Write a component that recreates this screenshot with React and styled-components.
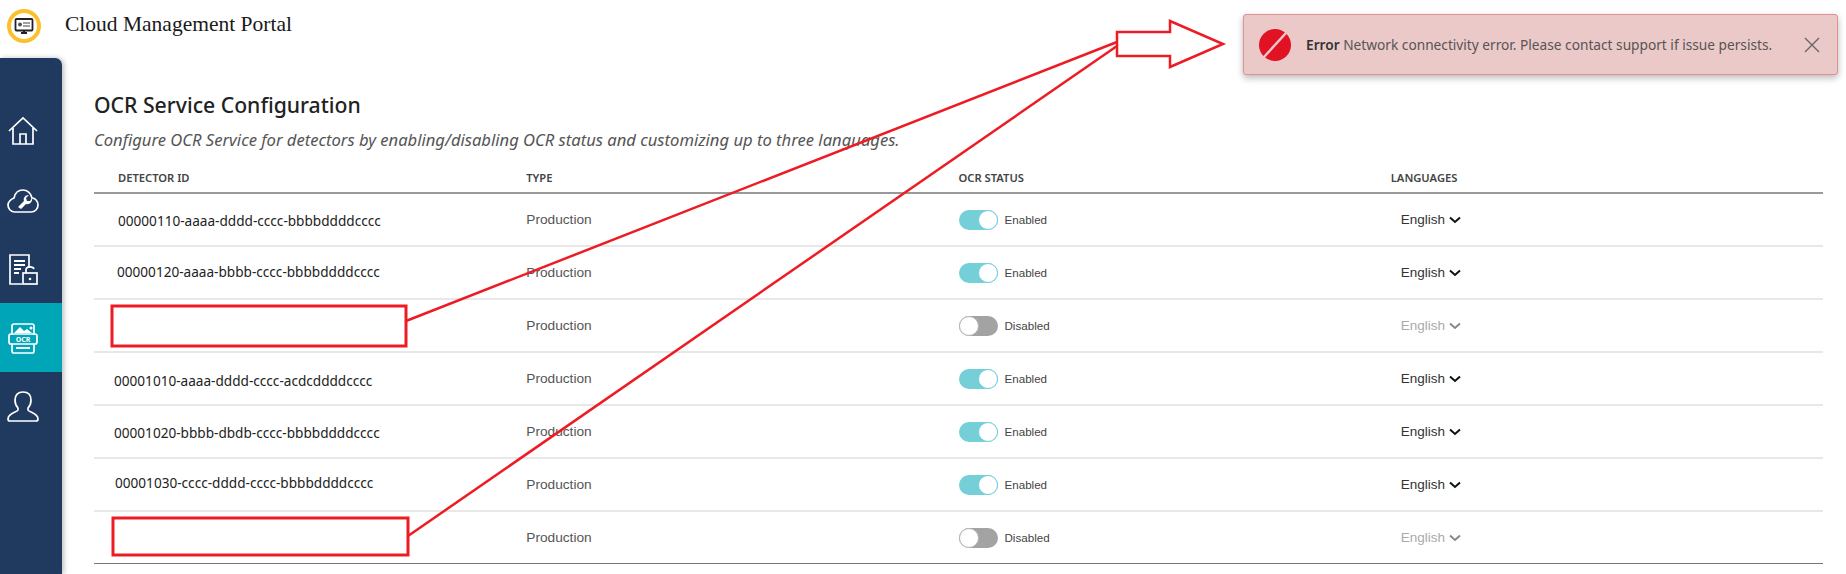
import React from 'react'
import styled, { createGlobalStyle } from 'styled-components'

const GlobalStyle = createGlobalStyle`
  html, body {
    margin: 0;
    padding: 0;
    background: #fff;
    overflow: hidden;
  }
`

const Page = styled.div`
  position: relative;
  width: 1846px;
  height: 574px;
  overflow: hidden;
  display: flex;
  flex-direction: column;
  font-family: 'Noto Sans', sans-serif;
`

const TopBar = styled.header`
  height: 58px;
  flex: none;
  display: flex;
  align-items: flex-start;
  padding: 9px 0 0 7px;
  box-sizing: border-box;
  gap: 24px;
`

const PortalName = styled.div`
  font-family: 'Liberation Serif', serif;
  font-size: 21.5px;
  line-height: 24px;
  color: #1a1a1a;
  margin-top: 3px;
`

const Body = styled.div`
  flex: 1;
  display: flex;
  min-height: 0;
`

const Sidebar = styled.nav`
  width: 62px;
  flex: none;
  background: #203a5f;
  border-top-right-radius: 7px;
  box-shadow: 2px 0 5px rgba(0, 0, 0, 0.25);
  padding-top: 38px;
  box-sizing: border-box;
`

const NavItem = styled.div`
  height: 69px;
  padding-left: 7px;
  display: flex;
  align-items: center;
  background: ${(p) => (p.$active ? '#00a6b8' : 'transparent')};
`

const Main = styled.main`
  flex: 1;
  padding: 32px 23px 0 32px;
  min-width: 0;
`

const Title = styled.h1`
  margin: 0;
  font-size: 21.2px;
  line-height: 29px;
  font-weight: 500;
  color: #222;
`

const Subtitle = styled.p`
  margin: 11px 0 0;
  font-size: 16.6px;
  line-height: 20px;
  font-style: italic;
  color: #555;
`

const Table = styled.div`
  margin-top: 18px;
  border-bottom: 1px solid #777;
`

const Row = styled.div`
  display: grid;
  grid-template-columns: repeat(4, 1fr);
  align-items: center;
  height: 53px;
  box-sizing: border-box;
  border-bottom: 2px solid #e8e8e8;

  &:last-child {
    border-bottom: none;
    height: 51px;
  }
`

const HeadRow = styled.div`
  display: grid;
  grid-template-columns: repeat(4, 1fr);
  align-items: center;
  height: 26px;
  box-sizing: border-box;
  border-bottom: 2px solid #999;
  padding-bottom: 6px;
`

const HeadCell = styled.div`
  font-size: 11.2px;
  font-weight: 600;
  color: #444;
  padding-left: ${(p) => p.$indent || 0}px;
`

// the ids sit slightly off the row centre in the reference
const DetectorId = styled.div`
  font-size: 13.6px;
  color: #222;
  min-height: 18px;
  line-height: 18px;
  padding-left: ${(p) => p.$indent}px;
  padding-top: ${(p) => p.$drop || 0}px;
  padding-bottom: ${(p) => p.$rise || 0}px;
`

const TypeCell = styled.div`
  font-family: 'Liberation Sans', sans-serif;
  font-size: 13.7px;
  color: #555;
`

const StatusCell = styled.div`
  display: flex;
  align-items: center;
  gap: 7px;
  font-family: 'Liberation Sans', sans-serif;
  font-size: 11.6px;
  color: #444;
`

const Toggle = styled.span`
  position: relative;
  width: 39px;
  height: 20px;
  border-radius: 10px;
  background: ${(p) => (p.$on ? '#74cfd9' : '#a3a3a3')};

  &::after {
    content: '';
    position: absolute;
    top: 0;
    left: ${(p) => (p.$on ? '19px' : '0')};
    width: 18px;
    height: 18px;
    border-radius: 50%;
    background: #fff;
    border: 1px solid ${(p) => (p.$on ? '#74cfd9' : '#b5b5b5')};
  }
`

const LanguageCell = styled.div`
  display: flex;
  align-items: center;
  gap: 4px;
  padding-left: 10px;
  font-family: 'Liberation Sans', sans-serif;
  font-size: 13.5px;
  color: ${(p) => (p.$off ? '#aaa' : '#333')};
`

const Chevron = styled.svg`
  width: 12px;
  height: 8px;
  fill: none;
  stroke: ${(p) => (p.$off ? '#888' : '#111')};
  stroke-width: 2;
`

const Toast = styled.div`
  position: absolute;
  left: 1243px;
  top: 14px;
  width: 595px;
  height: 61px;
  box-sizing: border-box;
  display: flex;
  align-items: center;
  padding: 0 17px 0 15px;
  background: #ecc9c9;
  border: 1px solid #df9090;
  border-radius: 3px;
  box-shadow: 0 3px 7px rgba(0, 0, 0, 0.28);
  font-size: 13.7px;
  color: #555;
`

const ToastText = styled.div`
  flex: 1;
  margin-left: 15px;

  strong {
    color: #333;
    font-weight: 600;
  }
`

const Annotations = styled.svg`
  position: absolute;
  left: 0;
  top: 0;
  width: 1846px;
  height: 574px;
  pointer-events: none;
  fill: none;
  stroke: #ed1c24;
`

const NavIcon = styled.svg`
  width: 32px;
  height: 32px;
  fill: none;
  stroke: #fff;
  stroke-width: 1.7;
`

const HomeIcon = () => (
  <NavIcon viewBox="0 0 32 32">
    <path d="M2 16 16 3l14 13" />
    <path d="M6 13v16h20V13" />
    <path d="M13 29V19h6v10" />
  </NavIcon>
)

const CloudIcon = () => (
  <NavIcon viewBox="0 0 32 32">
    <path d="M8 28h16c4 0 7-3 7-7s-3-7-6-7c-1-5-5-8-9-8-5 0-8 3-9 8-3 1-6 4-6 7 0 4 3 7 7 7z" />
    <path d="M11 23l6-6c-1-3 1-6 5-6l-3 3 1 3 3 0 2-3c1 4-3 7-6 6l-5 5z" fill="#fff" stroke="none" />
  </NavIcon>
)

const PolicyIcon = () => (
  <NavIcon viewBox="0 0 32 32">
    <path d="M22 15V2H3v29h12" />
    <path d="M7 8h11M7 12h11M7 16h7M7 20h5" strokeWidth="2" />
    <rect x="16" y="20" width="14" height="11" />
    <path d="M19 20v-3c0-4 7-4 8-1" />
    <circle cx="23" cy="26" r="1.3" fill="#fff" stroke="none" />
  </NavIcon>
)

const OcrIcon = () => (
  <NavIcon viewBox="0 0 32 32">
    <path d="M5 13V4a2 2 0 0 1 2-2h18a2 2 0 0 1 2 2v9" />
    <path d="M7 11l6-6 4 4 3-2 5 4z" fill="#fff" stroke="none" />
    <circle cx="24" cy="6" r="1.5" fill="#fff" stroke="none" />
    <rect x="2" y="12" width="28" height="10" rx="2" />
    <text x="16" y="20" textAnchor="middle" fontSize="7" fontWeight="700" fill="#fff" stroke="none" fontFamily="Noto Sans, sans-serif">OCR</text>
    <path d="M5 22v7a2 2 0 0 0 2 2h18a2 2 0 0 0 2-2v-7" />
    <path d="M9 26h14" strokeWidth="2" />
  </NavIcon>
)

const PersonIcon = () => (
  <NavIcon viewBox="0 0 32 32">
    <path d="M11 17c-2-2-3-5-3-8 0-5 3-8 8-8s8 3 8 8c0 3-1 6-3 8v2c0 2 10 3 10 9 0 2-1 2-2 2H3c-1 0-2 0-2-2 0-6 10-7 10-9z" />
  </NavIcon>
)

const LogoIcon = () => (
  <svg width="34" height="34" viewBox="0 0 34 34">
    <circle cx="17" cy="17" r="15" fill="#fff" stroke="#fcc02e" strokeWidth="4" />
    <rect x="8.5" y="10" width="17" height="11.5" rx="1" fill="#fff" stroke="#222" strokeWidth="1.8" />
    <circle cx="13" cy="15.5" r="2" fill="#555" />
    <path d="M16 14h7M16 17h7" stroke="#444" strokeWidth="1.2" />
    <path d="M14 24h6M17 21.5V24" stroke="#222" strokeWidth="2" />
  </svg>
)

const ErrorIcon = () => (
  <svg width="32" height="32" viewBox="0 0 32 32">
    <circle cx="16" cy="16" r="16" fill="#e01224" />
    <path d="M5 28 27 4" stroke="#ecc9c9" strokeWidth="2.5" />
  </svg>
)

const CloseIcon = () => (
  <svg width="16" height="16" viewBox="0 0 16 16" fill="none" stroke="#666" strokeWidth="1.4">
    <path d="M1 1l14 14M15 1 1 15" />
  </svg>
)

const detectors = [
  { id: '00000110-aaaa-dddd-cccc-bbbbddddcccc', indent: 24, drop: 3, on: true },
  { id: '00000120-aaaa-bbbb-cccc-bbbbddddcccc', indent: 23, rise: 2, on: true },
  { id: '', indent: 24, on: false },
  { id: '00001010-aaaa-dddd-cccc-acdcddddcccc', indent: 20, drop: 5, on: true },
  { id: '00001020-bbbb-dbdb-cccc-bbbbddddcccc', indent: 20, drop: 3, on: true },
  { id: '00001030-cccc-dddd-cccc-bbbbddddcccc', indent: 21, rise: 3, on: true },
  { id: '', indent: 24, on: false },
]

export default function App() {
  return (
    <Page>
      <GlobalStyle />
      <TopBar>
        <LogoIcon />
        <PortalName>Cloud Management Portal</PortalName>
      </TopBar>
      <Body>
        <Sidebar>
          <NavItem><HomeIcon /></NavItem>
          <NavItem><CloudIcon /></NavItem>
          <NavItem><PolicyIcon /></NavItem>
          <NavItem $active><OcrIcon /></NavItem>
          <NavItem><PersonIcon /></NavItem>
        </Sidebar>
        <Main>
          <Title>OCR Service Configuration</Title>
          <Subtitle>Configure OCR Service for detectors by enabling/disabling OCR status and customizing up to three languages.</Subtitle>
          <Table>
            <HeadRow>
              <HeadCell $indent={24}>DETECTOR ID</HeadCell>
              <HeadCell>TYPE</HeadCell>
              <HeadCell>OCR STATUS</HeadCell>
              <HeadCell>LANGUAGES</HeadCell>
            </HeadRow>
            {detectors.map((d, index) => (
              <Row key={d.id + index}>
                <DetectorId $indent={d.indent} $drop={d.drop} $rise={d.rise}>{d.id}</DetectorId>
                <TypeCell>Production</TypeCell>
                <StatusCell>
                  <Toggle $on={d.on} />
                  {d.on ? 'Enabled' : 'Disabled'}
                </StatusCell>
                <LanguageCell $off={!d.on}>
                  English
                  <Chevron $off={!d.on} viewBox="0 0 12 8"><path d="M1 1.5 6 6l5-4.5" /></Chevron>
                </LanguageCell>
              </Row>
            ))}
          </Table>
        </Main>
      </Body>
      <Annotations viewBox="0 0 1846 574">
        <rect x="112" y="306" width="294" height="40" strokeWidth="3" />
        <rect x="113" y="518" width="295" height="37" strokeWidth="3" />
        <path d="M406 321 1117 42" strokeWidth="2.5" />
        <path d="M408 536 1117 46" strokeWidth="2.5" />
        <path d="M1117 32h53V21l53 23-53 23V56h-53z" strokeWidth="2.5" fill="#fff" />
      </Annotations>
      <Toast>
        <ErrorIcon />
        <ToastText><strong>Error</strong> Network connectivity error. Please contact support if issue persists.</ToastText>
        <CloseIcon />
      </Toast>
    </Page>
  )
}
